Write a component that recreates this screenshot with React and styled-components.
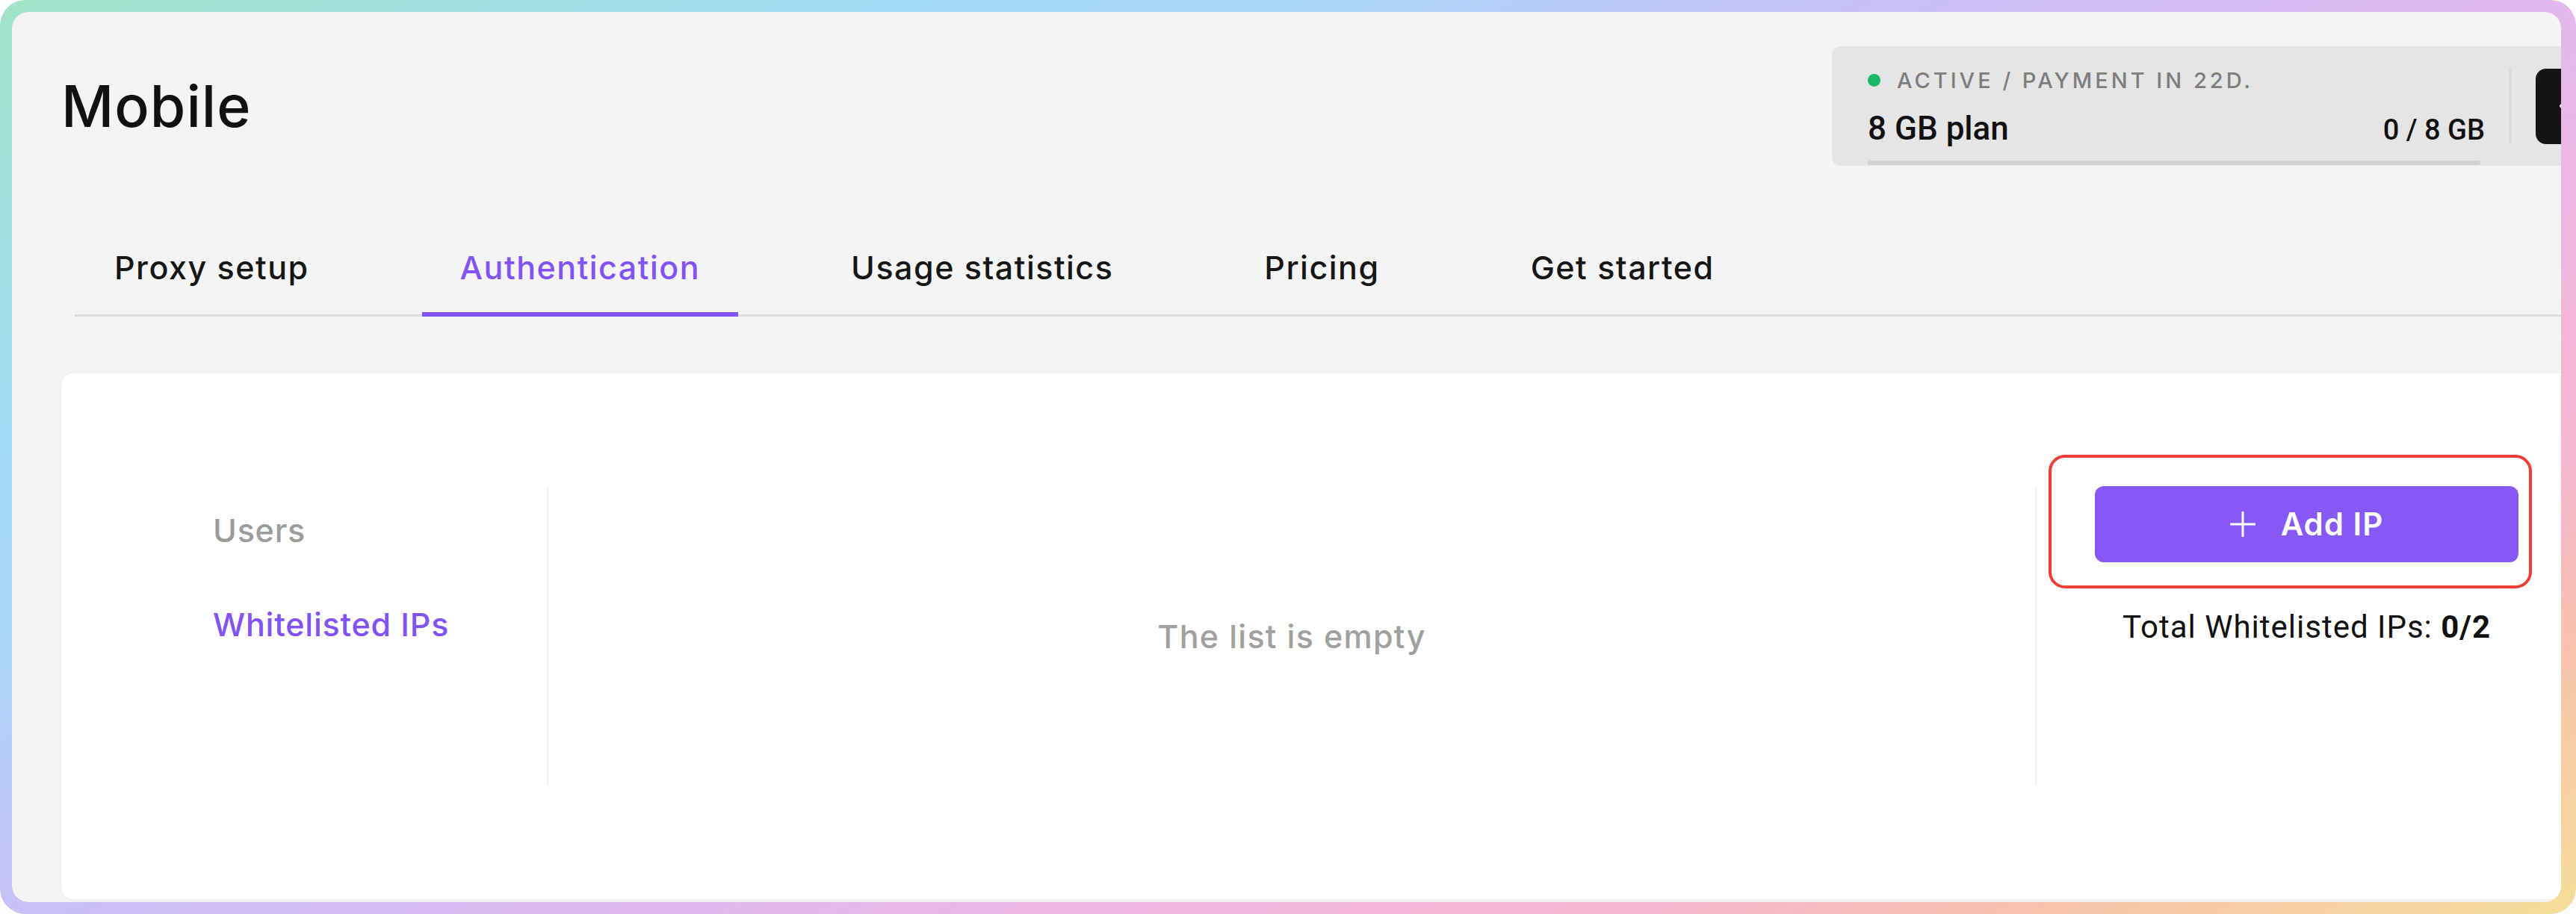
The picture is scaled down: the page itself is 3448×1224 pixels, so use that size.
import React from 'react';
import styled, { createGlobalStyle } from 'styled-components';
import { ArrowLeft } from 'lucide-react';

const GlobalStyle = createGlobalStyle`
  html, body {
    margin: 0;
    padding: 0;
    background: #ffffff;
  }
  body {
    font-family: Inter, "Open Sans", sans-serif;
  }
  * {
    box-sizing: border-box;
  }
`;

const PURPLE = '#8153f3';

const Frame = styled.div`
  width: 3448px;
  height: 1224px;
  padding: 16px 20px 16px 16px;
  border-radius: 34px;
  background: linear-gradient(
    154deg,
    #a0e4c8 0%,
    #a0daf4 20%,
    #aad5f7 30%,
    #c7c0f6 42%,
    #e0b8ef 57%,
    #f2b5dd 70%,
    #f5b6cf 79%,
    #f7c3ab 88%,
    #f5dd9a 100%
  );
`;

const Screen = styled.div`
  height: 100%;
  background: #f4f4f4;
  border-radius: 22px;
  overflow: hidden;
`;

const Page = styled.div`
  width: 3506px;
  height: 100%;
  padding: 0 0 4px 66px;
  display: flex;
  flex-direction: column;
`;

const Header = styled.header`
  display: flex;
  align-items: center;
  padding-top: 46px;
`;

const Title = styled.h1`
  flex: 1;
  margin: 0;
  font-size: 77px;
  line-height: 1;
  font-weight: 500;
  letter-spacing: 1px;
  color: #111111;
`;

const StatusBox = styled.div`
  width: 1070px;
  height: 160px;
  flex-shrink: 0;
  display: flex;
  padding-left: 48px;
  background: #e5e5e5;
  border-radius: 12px;
`;

const Info = styled.div`
  width: 826px;
  display: flex;
  flex-direction: column;
  padding-top: 31px;
`;

const StatusLine = styled.div`
  display: flex;
  align-items: center;
  gap: 22px;
  font-size: 29px;
  line-height: 1;
  font-weight: 500;
  letter-spacing: 4px;
  text-transform: uppercase;
  color: #7d7d7d;
`;

const Dot = styled.span`
  width: 17px;
  height: 17px;
  border-radius: 50%;
  background: #17b866;
`;

const PlanRow = styled.div`
  display: flex;
  justify-content: space-between;
  align-items: baseline;
  margin-top: 28px;
  font-family: Roboto, "Liberation Sans", sans-serif;
  font-weight: 500;
  color: #111111;
  line-height: 1;
`;

const PlanName = styled.span`
  font-size: 44px;
`;

const PlanUsage = styled.span`
  font-size: 38px;
`;

const Bar = styled.div`
  margin-top: auto;
  margin-bottom: 1px;
  width: 820px;
  height: 6px;
  border-radius: 3px;
  background: #d2d2d2;
`;

const VDivider = styled.div`
  align-self: center;
  width: 2px;
  height: 100px;
  margin-left: 33px;
  background: #d7d7d7;
`;

const DarkButton = styled.div`
  align-self: center;
  width: 100px;
  height: 101px;
  margin-left: 33px;
  border-radius: 14px;
  background: #141414;
  display: flex;
  align-items: center;
  padding-left: 26px;
  color: #ffffff;
`;

const TabBar = styled.nav`
  display: flex;
  gap: 100px;
  margin-top: 115px;
  margin-left: 18px;
  padding-left: 2px;
  border-bottom: 3px solid #dcdcdc;
`;

const Tab = styled.div`
  padding: 0 51px 38px;
  margin-bottom: -3px;
  font-size: 43px;
  line-height: 1;
  font-weight: 500;
  letter-spacing: 1.5px;
  color: ${(p) => (p.$active ? PURPLE : '#161616')};
  border-bottom: 6px solid ${(p) => (p.$active ? PURPLE : 'transparent')};
`;

const Card = styled.section`
  flex: 1;
  margin-top: 76px;
  margin-right: 73px;
  padding-top: 151px;
  background: #ffffff;
  border-radius: 16px;
  box-shadow: 0 0 3px rgba(0, 0, 0, 0.05);
`;

const Row = styled.div`
  display: flex;
  height: 402px;
`;

const SideNav = styled.div`
  width: 652px;
  display: flex;
  flex-direction: column;
  gap: 83px;
  padding: 38px 0 0 203px;
  border-right: 2px solid #f0f0f0;
`;

const NavItem = styled.div`
  font-size: 43px;
  line-height: 1;
  font-weight: 500;
  letter-spacing: 0.8px;
  color: ${(p) => (p.$active ? PURPLE : '#9c9c9c')};
`;

const ListArea = styled.div`
  flex: 1;
  display: flex;
  align-items: center;
  justify-content: center;
  border-right: 2px solid #f0f0f0;
`;

const EmptyText = styled.div`
  font-size: 43px;
  line-height: 1;
  font-weight: 500;
  letter-spacing: 1.3px;
  color: #a0a0a0;
`;

const Actions = styled.div`
  width: 723px;
  padding: 0 78px;
  display: flex;
  flex-direction: column;
  align-items: center;
`;

const AddWrap = styled.div`
  position: relative;
  width: 567px;
`;

const AddButton = styled.button`
  width: 100%;
  height: 102px;
  border: none;
  border-radius: 12px;
  background: #8658f6;
  color: #ffffff;
  font-family: Inter, "Open Sans", sans-serif;
  font-size: 42px;
  line-height: 1;
  font-weight: 600;
  letter-spacing: 1px;
  display: flex;
  align-items: center;
  justify-content: center;
  gap: 34px;
`;

const Highlight = styled.div`
  position: absolute;
  top: -42px;
  bottom: -35px;
  left: -62px;
  right: -18px;
  border: 4px solid #ee3f36;
  border-radius: 22px;
  pointer-events: none;
`;

const Total = styled.div`
  margin-top: 66px;
  font-family: Roboto, "Liberation Sans", sans-serif;
  font-size: 42px;
  line-height: 1;
  letter-spacing: 1px;
  color: #111111;

  b {
    font-weight: 700;
  }
`;

const PlusIcon = () => (
  <svg width="34" height="34" viewBox="0 0 34 34" fill="none">
    <path d="M17 1v32M1 17h32" stroke="#ffffff" strokeWidth="3" strokeLinecap="round" />
  </svg>
);

const tabs = ['Proxy setup', 'Authentication', 'Usage statistics', 'Pricing', 'Get started'];

export default function App() {
  return (
    <>
      <GlobalStyle />
      <Frame>
        <Screen>
          <Page>
            <Header>
              <Title>Mobile</Title>
              <StatusBox>
                <Info>
                  <StatusLine>
                    <Dot />
                    Active / Payment in 22d.
                  </StatusLine>
                  <PlanRow>
                    <PlanName>8 GB plan</PlanName>
                    <PlanUsage>0 / 8 GB</PlanUsage>
                  </PlanRow>
                  <Bar />
                </Info>
                <VDivider />
                <DarkButton>
                  <ArrowLeft size={44} strokeWidth={3} />
                </DarkButton>
              </StatusBox>
            </Header>

            <TabBar>
              {tabs.map((t) => (
                <Tab key={t} $active={t === 'Authentication'}>
                  {t}
                </Tab>
              ))}
            </TabBar>

            <Card>
              <Row>
                <SideNav>
                  <NavItem>Users</NavItem>
                  <NavItem $active>Whitelisted IPs</NavItem>
                </SideNav>
                <ListArea>
                  <EmptyText>The list is empty</EmptyText>
                </ListArea>
                <Actions>
                  <AddWrap>
                    <AddButton>
                      <PlusIcon />
                      Add IP
                    </AddButton>
                    <Highlight />
                  </AddWrap>
                  <Total>
                    Total Whitelisted IPs: <b>0/2</b>
                  </Total>
                </Actions>
              </Row>
            </Card>
          </Page>
        </Screen>
      </Frame>
    </>
  );
}
